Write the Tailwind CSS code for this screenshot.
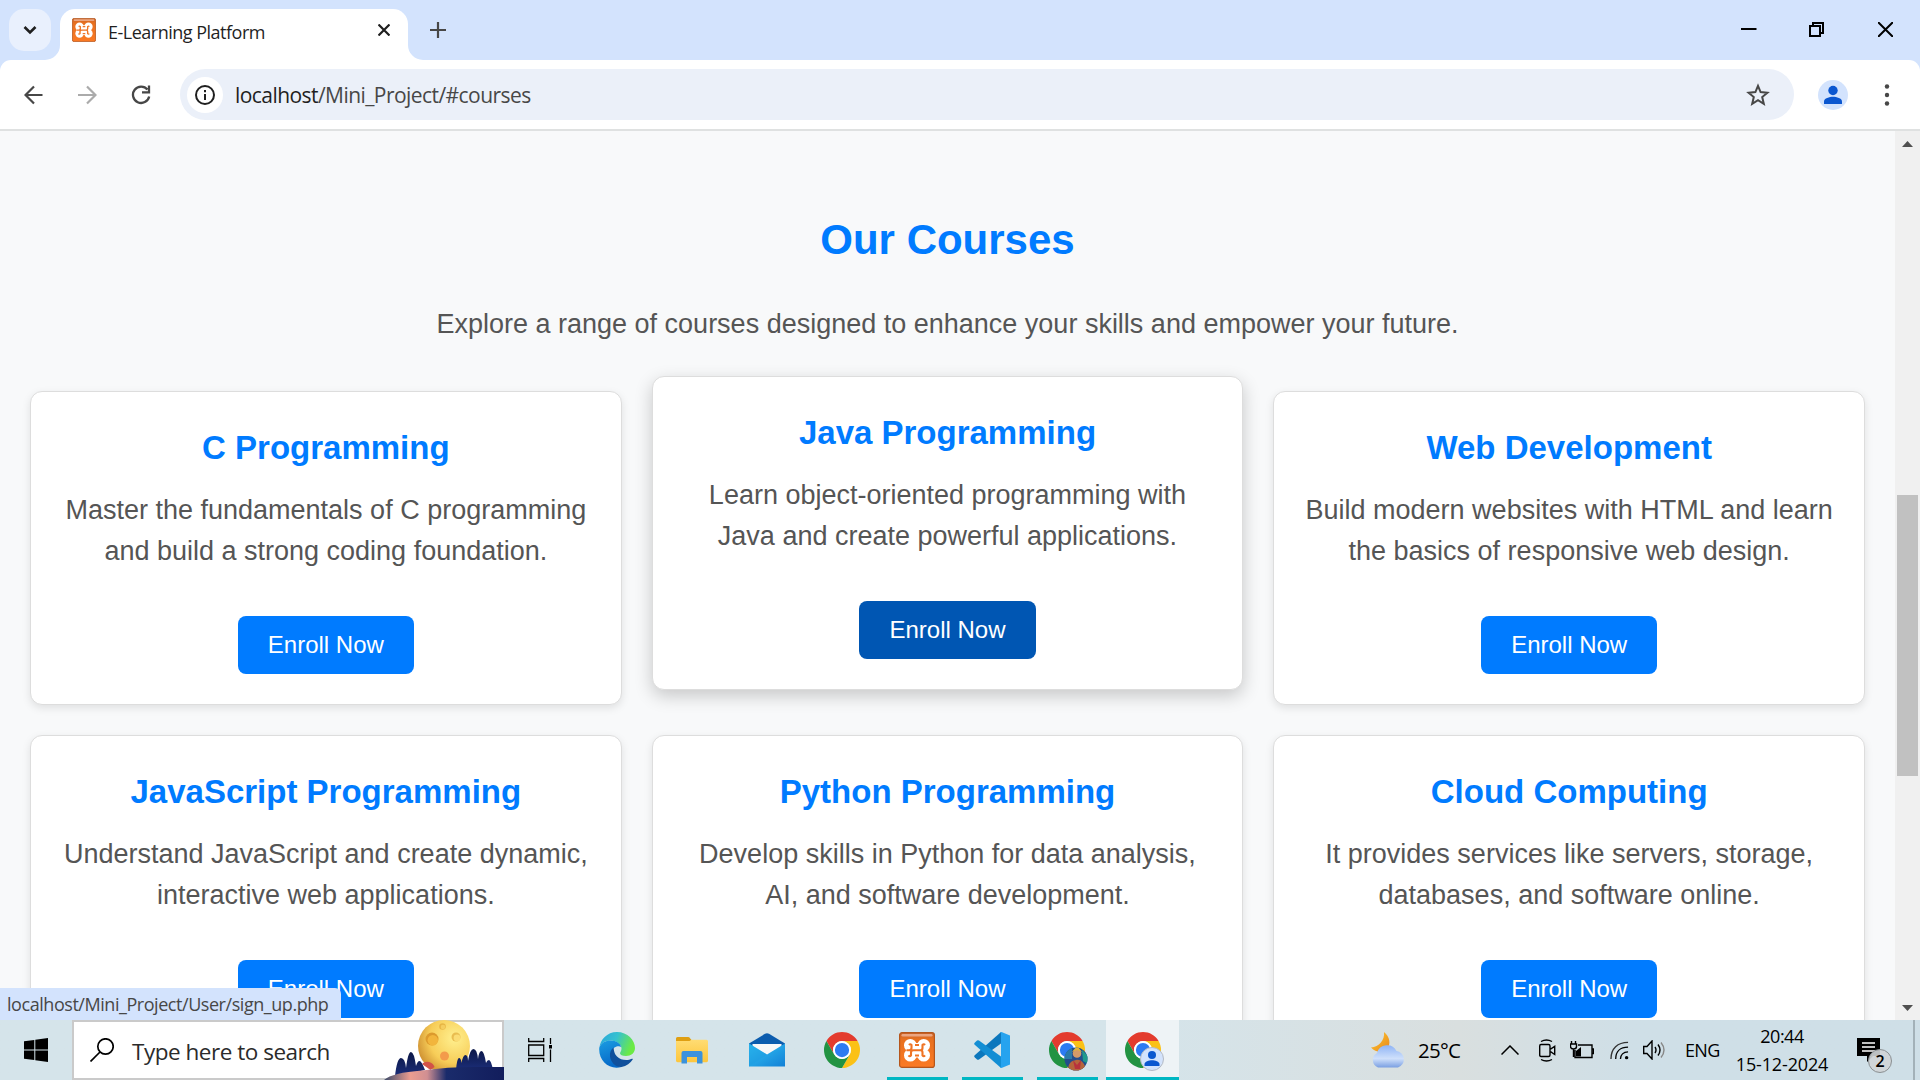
<!DOCTYPE html>
<html lang="en">
<head>
<meta charset="utf-8">
<title>E-Learning Platform</title>
<script src="https://cdn.jsdelivr.net/npm/@tailwindcss/browser@4"></script>
</head>
<body class="w-[1920px] h-[1080px] overflow-hidden flex flex-col relative bg-white font-['Open_Sans',sans-serif]">

<!-- shared icon symbols -->
<svg class="absolute w-0 h-0" aria-hidden="true">
  <defs>
    <linearGradient id="xg" x1="0" y1="0" x2="0" y2="1"><stop offset="0" stop-color="#c9642a"/><stop offset=".2" stop-color="#e8701f"/><stop offset="1" stop-color="#fb7a24"/></linearGradient>
    <linearGradient id="e1" x1="0" y1="0" x2="1" y2=".3"><stop offset="0" stop-color="#2aa5dc"/><stop offset=".5" stop-color="#35c1d0"/><stop offset="1" stop-color="#6bea45"/></linearGradient>
    <linearGradient id="e2" x1="0" y1="0" x2=".3" y2="1"><stop offset="0" stop-color="#1b9de2"/><stop offset="1" stop-color="#0669c8"/></linearGradient>
    <linearGradient id="fo" x1="0" y1="0" x2="0" y2="1"><stop offset="0" stop-color="#ffdc73"/><stop offset="1" stop-color="#fdc63c"/></linearGradient>
    <linearGradient id="ma" x1="0" y1="0" x2="1" y2="1"><stop offset="0" stop-color="#32c5f5"/><stop offset="1" stop-color="#1380d6"/></linearGradient>
    <linearGradient id="cl" x1="0" y1="0" x2="0" y2="1"><stop offset="0" stop-color="#8fb4f5"/><stop offset=".6" stop-color="#cfe0fb"/><stop offset="1" stop-color="#7a9fe2"/></linearGradient>
    <linearGradient id="mn" x1="0" y1="0" x2="1" y2="1"><stop offset="0" stop-color="#ffcb30"/><stop offset="1" stop-color="#e8861c"/></linearGradient>
    <radialGradient id="moon" cx=".7" cy=".35" r=".8"><stop offset="0" stop-color="#fff08f"/><stop offset=".6" stop-color="#f7cd58"/><stop offset="1" stop-color="#c8872c"/></radialGradient>
    <linearGradient id="hill" x1="0" y1="0" x2="1" y2="0"><stop offset="0" stop-color="#3a4a6a"/><stop offset=".22" stop-color="#eb9d90"/><stop offset=".36" stop-color="#d08f92"/><stop offset=".52" stop-color="#1a2b6b"/><stop offset="1" stop-color="#121d5c"/></linearGradient>
    <linearGradient id="tree" x1="0" y1="0" x2="0" y2="1"><stop offset="0" stop-color="#0c1848"/><stop offset="1" stop-color="#1b2d78"/></linearGradient>
    <clipPath id="bc"><circle cx="27" cy="27" r="11.5"/></clipPath>
    <symbol id="xampp" viewBox="0 0 36 36">
      <rect x=".6" y=".6" width="34.8" height="34.8" rx="2.500" fill="url(#xg)" stroke="#b5561c" stroke-width="1.200"/>
      <rect x="2.500" y="2" width="31" height="2.400" rx="1.200" fill="#eba580"/>
      <g fill="#fff"><circle cx="11.300" cy="13.200" r="6.300"/><circle cx="24.700" cy="13.200" r="6.300"/><circle cx="11.300" cy="23.300" r="6.300"/><circle cx="24.700" cy="23.300" r="6.300"/><rect x="8" y="11" width="20" height="14.500"/></g>
      <path d="M10 13q1.200-1.600 2.500 0v3q0 2.200-2.300 2.200H7.500M26 13q-1.200-1.600-2.500 0v3q0 2.200-2 2.200h-7q-2.500 0-2.500 2.200v3q-1.200 1.600-2.500 0M21.500 18.200q2 0 2 2.200v3q1.200 1.600 2.500 0M16 13h4M16 23.500h4" fill="none" stroke="#ef7425" stroke-width="2.100"/>
    </symbol>
    <symbol id="chrome" viewBox="0 0 48 48">
      <path fill="#e33b2e" d="M24 12H44.780A24 24 0 0 0 3.220 12L13.610 30A12 12 0 0 1 24 12z"/>
      <path fill="#fbc116" d="M44.780 12A24 24 0 0 1 24 48L34.390 30A12 12 0 0 0 24 12z"/>
      <path fill="#229342" d="M24 48A24 24 0 0 1 3.220 12L13.610 30A12 12 0 0 0 34.390 30z"/>
      <circle cx="24" cy="24" r="12" fill="#fff"/><circle cx="24" cy="24" r="9.500" fill="#2c7bf2"/>
    </symbol>
  </defs>
</svg>

<!-- tab strip -->
<header class="h-[60px] shrink-0 bg-[#d3e3fd] flex items-start relative">
  <button class="mt-[9px] ml-[9px] w-[42px] h-[42px] rounded-[15px] bg-[#e9f0fd] flex items-center justify-center">
    <svg class="w-4 h-4" viewBox="0 0 16 16" fill="none" stroke="#1f1f1f" stroke-width="2.600"><path d="M2.500 5l5.500 5.500L13.500 5"/></svg>
  </button>
  <div class="mt-[9px] ml-[9px] w-[348px] h-[51px] rounded-t-[15px] bg-white flex items-center pl-3 pr-[18px] relative">
    <svg class="absolute -left-[15px] bottom-0 w-[15px] h-[15px]" viewBox="0 0 15 15"><path d="M15 0v15H0A15 15 0 0 0 15 0z" fill="#fff"/></svg>
    <svg class="absolute -right-[15px] bottom-0 w-[15px] h-[15px]" viewBox="0 0 15 15"><path d="M0 0v15h15A15 15 0 0 1 0 0z" fill="#fff"/></svg>
    <svg class="w-6 h-6 -mt-[9px]"><use href="#xampp"/></svg>
    <span class="ml-[12px] -mt-[5px] text-[18px] text-[#1f1f1f] whitespace-nowrap tracking-[-0.5px]">E-Learning Platform</span>
    <svg class="ml-auto -mt-[9px] w-3 h-3" viewBox="0 0 12 12" stroke="#1f1f1f" stroke-width="2.200"><path d="M.5.5l11 11M11.500.5l-11 11"/></svg>
  </div>
  <svg class="mt-[22px] ml-[22px] w-4 h-4" viewBox="0 0 16 16" stroke="#474747" stroke-width="2.200"><path d="M8 0v16M0 8h16"/></svg>
  <div class="ml-auto mr-[27px] mt-[22px] flex gap-[53px] text-black">
    <svg class="w-[16px] h-[15px]" viewBox="0 0 16 15" stroke="#000" stroke-width="2"><path d="M0 7h15.500"/></svg>
    <svg class="w-[15px] h-[15px] -ml-px" viewBox="0 0 15 15" fill="none" stroke="#000" stroke-width="2"><path d="M1 4h10v10H1zM4 4V1h10v10h-3"/></svg>
    <svg class="w-[15px] h-[15px] ml-px" viewBox="0 0 15 15" stroke="#000" stroke-width="2"><path d="M0 0l15 15M15 0L0 15"/></svg>
  </div>
</header>

<!-- toolbar -->
<div class="h-[71px] shrink-0 bg-[#d3e3fd]">
  <div class="h-full bg-white rounded-t-[11px] border-b-2 border-[#dfe1e1] flex items-center pl-[24px] pr-[29px]">
    <svg class="w-5 h-5" viewBox="0 0 20 20" fill="none" stroke="#474747" stroke-width="2.200"><path d="M18.500 10H2M10 1.500L1.500 10l8.500 8.500"/></svg>
    <svg class="w-5 h-5 ml-[33px]" viewBox="0 0 20 20" fill="none" stroke="#ababab" stroke-width="2.200"><path d="M1 10h17M10 1.500l8.500 8.500-8.500 8.500"/></svg>
    <svg class="w-5 h-5 ml-[34px]" viewBox="0 0 20 20" fill="none" stroke="#474747" stroke-width="2.300"><path d="M16.500 4.500A8.200 8.200 0 1 0 18.200 11.500M18 .5v6.800h-7"/></svg>
    <div class="ml-[29px] w-[1614px] h-[51px] rounded-full bg-[#ebf0f9] flex items-center pl-[7px] pr-[24px]">
      <div class="w-9 h-9 rounded-full bg-white flex items-center justify-center">
        <svg class="w-5 h-5" viewBox="0 0 20 20" fill="none" stroke="#1f1f1f" stroke-width="2"><circle cx="10" cy="10" r="9"/><path d="M10 9v6M10 5v2.200"/></svg>
      </div>
      <span class="ml-3 text-[21px] leading-[30px] text-[#474747] whitespace-nowrap tracking-[-0.56px]"><span class="text-[#1f1f1f]">localhost</span>/Mini_Project/#courses</span>
      <svg class="ml-auto w-6 h-6" viewBox="0 0 24 24" fill="none" stroke="#474747" stroke-width="2"><path d="M12 2.800l2.600 6.300 6.800.6-5.200 4.400 1.600 6.700L12 17.200l-5.800 3.600 1.600-6.700L2.600 9.700l6.800-.6z"/></svg>
    </div>
    <svg class="ml-6 w-[30px] h-[30px]" viewBox="0 0 30 30"><circle cx="15" cy="15" r="15" fill="#d3e3fd"/><circle cx="15" cy="10.500" r="4.700" fill="#0b57d0"/><path d="M6 24v-2.500c0-3.200 5.500-4.700 9-4.700s9 1.500 9 4.700V24z" fill="#0b57d0"/></svg>
    <svg class="ml-auto w-2 h-6" viewBox="0 0 8 24" fill="#474747"><circle cx="4" cy="3.500" r="2.200"/><circle cx="4" cy="12" r="2.200"/><circle cx="4" cy="20.500" r="2.200"/></svg>
  </div>
</div>

<!-- page viewport -->
<div class="h-[889px] shrink-0 flex overflow-hidden relative font-['Liberation_Sans',Arial,sans-serif]">
  <main class="w-[1895px] bg-[#f8f9fa] pt-[75px] px-[30px] text-center">
    <h2 class="text-[42px] leading-[67px] font-bold text-[#007bff]">Our Courses</h2>
    <p class="mt-[31px] text-[27px] leading-[41px] text-[#555]">Explore a range of courses designed to enhance your skills and empower your future.</p>
    <div class="mt-[46px] grid grid-cols-3 gap-[30px]">

      <article class="h-[314px] p-[30px] bg-white border border-[#ddd] rounded-[12px] shadow-[0_3px_9px_rgba(0,0,0,0.1)]">
        <h3 class="text-[33px] leading-[51px] font-bold text-[#007bff]">C Programming</h3>
        <p class="mt-[17px] text-[27px] leading-[41px] text-[#555]">Master the fundamentals of C programming and build a strong coding foundation.</p>
        <a class="mt-[44px] inline-flex items-center justify-center w-[176px] h-[58px] rounded-[8px] bg-[#007bff] text-white text-[24px]">Enroll Now</a>
      </article>

      <article class="-translate-y-[15px] h-[314px] p-[30px] bg-white border border-[#ddd] rounded-[12px] shadow-[0_6px_18px_rgba(0,0,0,0.2)]">
        <h3 class="text-[33px] leading-[51px] font-bold text-[#007bff]">Java Programming</h3>
        <p class="mt-[17px] text-[27px] leading-[41px] text-[#555]">Learn object-oriented programming with Java and create powerful applications.</p>
        <a class="mt-[44px] inline-flex items-center justify-center w-[177px] h-[58px] rounded-[8px] bg-[#0056b3] text-white text-[24px]">Enroll Now</a>
      </article>

      <article class="h-[314px] p-[30px] bg-white border border-[#ddd] rounded-[12px] shadow-[0_3px_9px_rgba(0,0,0,0.1)]">
        <h3 class="text-[33px] leading-[51px] font-bold text-[#007bff]">Web Development</h3>
        <p class="mt-[17px] text-[27px] leading-[41px] text-[#555]">Build modern websites with HTML and learn the basics of responsive web design.</p>
        <a class="mt-[44px] inline-flex items-center justify-center w-[176px] h-[58px] rounded-[8px] bg-[#007bff] text-white text-[24px]">Enroll Now</a>
      </article>

      <article class="h-[314px] p-[30px] bg-white border border-[#ddd] rounded-[12px] shadow-[0_3px_9px_rgba(0,0,0,0.1)]">
        <h3 class="text-[33px] leading-[51px] font-bold text-[#007bff]">JavaScript Programming</h3>
        <p class="mt-[17px] text-[27px] leading-[41px] text-[#555]">Understand JavaScript and create dynamic, interactive web applications.</p>
        <a class="mt-[44px] inline-flex items-center justify-center w-[176px] h-[58px] rounded-[8px] bg-[#007bff] text-white text-[24px]">Enroll Now</a>
      </article>

      <article class="h-[314px] p-[30px] bg-white border border-[#ddd] rounded-[12px] shadow-[0_3px_9px_rgba(0,0,0,0.1)]">
        <h3 class="text-[33px] leading-[51px] font-bold text-[#007bff]">Python Programming</h3>
        <p class="mt-[17px] text-[27px] leading-[41px] text-[#555]">Develop skills in Python for data analysis, AI, and software development.</p>
        <a class="mt-[44px] inline-flex items-center justify-center w-[177px] h-[58px] rounded-[8px] bg-[#007bff] text-white text-[24px]">Enroll Now</a>
      </article>

      <article class="h-[314px] p-[30px] bg-white border border-[#ddd] rounded-[12px] shadow-[0_3px_9px_rgba(0,0,0,0.1)]">
        <h3 class="text-[33px] leading-[51px] font-bold text-[#007bff]">Cloud Computing</h3>
        <p class="mt-[17px] text-[27px] leading-[41px] text-[#555]">It provides services like servers, storage, databases, and software online.</p>
        <a class="mt-[44px] inline-flex items-center justify-center w-[176px] h-[58px] rounded-[8px] bg-[#007bff] text-white text-[24px]">Enroll Now</a>
      </article>
    </div>
  </main>

  <!-- scrollbar -->
  <div class="w-[25px] bg-[#f0f0f0] flex flex-col items-center pt-[10px] pb-[9px]">
    <svg class="w-[11px] h-[6px]" viewBox="0 0 11 6"><path d="M0 6L5.500 0 11 6z" fill="#505050"/></svg>
    <div class="mt-[348px] w-[21px] h-[281px] bg-[#c1c1c1]"></div>
    <svg class="mt-auto w-[11px] h-[6px]" viewBox="0 0 11 6"><path d="M0 0l5.500 6L11 0z" fill="#505050"/></svg>
  </div>

  <!-- link status bubble -->
  <div class="absolute left-0 bottom-0 w-[341px] h-8 pl-[7px] flex items-center rounded-tr-[6px] bg-[#d3e3fd] text-[18px] text-[#474747] whitespace-nowrap tracking-[-0.45px] font-['Open_Sans',sans-serif]">localhost/Mini_Project/User/sign_up.php</div>
</div>

<!-- taskbar -->
<footer class="h-[60px] shrink-0 flex bg-linear-to-r from-[#d5e4ea] from-60% via-[#d9dfdf] via-76% to-[#cfdfe7] to-85% text-black">
  <div class="w-[72px] flex items-center justify-center">
    <svg class="w-6 h-6" viewBox="0 0 24 24"><path d="M0 3.300L10.300 2v9.400H0zM11.300 1.800L24 0v11.400H11.300zM0 12.400h10.300V22L0 20.700zM11.300 12.400H24V24l-12.700-1.800z"/></svg>
  </div>
  <div class="w-[432px] h-full border-2 border-[#cacaca] bg-white flex items-center pl-4 relative">
    <svg class="w-6 h-6" viewBox="0 0 24 24" fill="none" stroke="#000" stroke-width="1.700"><circle cx="15.500" cy="8.500" r="7.700"/><path d="M10 14L.5 23.500"/></svg>
    <span class="ml-[18px] pt-[3px] text-[22.500px] text-[#2b2b2b] whitespace-nowrap tracking-[-0.48px]">Type here to search</span>
    <svg class="absolute -right-[2px] -top-[2px] w-[120px] h-[60px]" viewBox="0 0 120 60">
      <circle cx="60" cy="26" r="26" fill="url(#moon)"/>
      <circle cx="48" cy="19" r="6.500" fill="#dc9a2d"/><circle cx="48.800" cy="20.300" r="5.200" fill="#f2b53c"/>
      <circle cx="58.500" cy="6.500" r="3.300" fill="#e8b645"/><circle cx="59" cy="7" r="2.300" fill="#f5cd5e"/><circle cx="72" cy="17" r="4.500" fill="#e9bd50"/><circle cx="73" cy="18" r="3.400" fill="#fbdc74"/><circle cx="60.500" cy="36" r="4.500" fill="#f39b4b"/>
      <path d="M38 44a7.500 7.500 0 0 1 12.500 3l-4 3z" fill="#d25248"/>
      <path d="M11 56Q13 38 17 38T22 48Q24 32 27 32T32 46Q33.500 41 35.500 41T41 50L24 54z" fill="url(#tree)"/>
      <path d="M72 50Q73 38 75 38T77.500 43Q79 35 81.500 35T84 41Q86 29 89.500 29T94 39Q95 31 97.500 31T102 43Q103 40 105 40T109 50z" fill="url(#tree)"/>
      <path d="M0 60c6-5 18-8 38-9.500C56 48 72 47 90 47h30v13z" fill="url(#hill)"/>
    </svg>
  </div>
  <div class="w-[75px] flex items-center justify-center pr-[3px]">
    <svg class="w-6 h-6" viewBox="0 0 24 24" fill="none" stroke="#000" stroke-width="1.300"><path d="M.7 0v3.500h15V0M.7 7h15v10.500h-15zM.7 24v-3.500h15V24M22.500 0v6M22.500 11.500V24"/><path d="M21 7h3v3.500h-3z" fill="#000" stroke="none"/></svg>
  </div>
  <div class="w-[75px] flex items-center justify-center">
    <svg class="w-9 h-9" viewBox="0 0 36 36">
      <path d="M.5 15.500C1 8 8 0 18 0c10.500 0 18 8 18 16 0 5-4 8-9 8-4 0-6-1.500-6-2.800 0-1 1.500-1.700 1.500-4.700 0-4-5-8-11-8S1.500 12 .5 15.500z" fill="url(#e1)"/>
      <path d="M.3 15.500C2 11 6.500 8.500 11.500 8.500c6 0 10 3 10.700 6.500-2-1.500-8-1-9.700 5-1.500 6 3 13 10 15-12 3.500-23.500-6-22.200-19.500z" fill="url(#e2)"/>
      <path d="M14.500 15.500c-2.500 2-4 5-3.500 9 .8 6 6 11 11.500 10.500 5-1 9-4 11.200-7.500.3-.8-.3-1-.8-.7-5 2.500-11.400 1.200-14.900-2.300-3-3-3-6.500-3.500-9z" fill="#10509c"/>
    </svg>
  </div>
  <div class="w-[75px] flex items-center justify-center">
    <svg class="w-8 h-[27px]" viewBox="0 0 32 27"><path d="M0 1.500Q0 0 1.500 0H12q1.500 0 2 1.200L15.500 3v4H0z" fill="#df9f12"/><path d="M0 4h13.500l2-1.200H30.500Q32 2.800 32 4.300v19.500q0 1.400-1.500 1.400h-29Q0 25.200 0 23.800z" fill="url(#fo)"/><path d="M5.500 26.500V16q0-2 2-2h17q2 0 2 2v10.500h-5.500V20h-10v6.500z" fill="#3b92dc"/></svg>
  </div>
  <div class="w-[75px] flex items-center justify-center">
    <svg class="w-9 h-[34px]" viewBox="0 0 36 34"><path d="M0 10.500L16 .8q2-1.200 4 0l16 9.700V14H0z" fill="#0b5cae"/><path d="M3.500 11h29v3L18 23 3.500 14z" fill="#f7f7f8"/><path d="M0 10.500l18 11 18-11v23H0z" fill="url(#ma)"/><path d="M18 21.500L0 33.500V10.500z" fill="#1c9cdf" opacity=".45"/></svg>
  </div>
  <div class="w-[75px] flex items-center justify-center"><svg class="w-9 h-9"><use href="#chrome"/></svg></div>
  <div class="w-[75px] pl-px flex flex-col items-center pt-3"><svg class="w-9 h-9"><use href="#xampp"/></svg><div class="mt-auto w-[61px] h-[3px] bg-[#00b7c3]"></div></div>
  <div class="w-[75px] pl-px flex flex-col items-center pt-3">
    <svg class="w-9 h-9" viewBox="0 0 36 36"><path d="M27 0v11.500L5 27.500q-1 .7-2 0L.7 25.300q-1-1 0-2z" fill="#0b77bd"/><path d="M27 36V24.500L5 8.500q-1-.7-2 0L.7 10.700q-1 1 0 2z" fill="#138ed4"/><path d="M26 .3l1.500-.3L36 3.500v29L27.500 36 26 35.500q1 0 1-1.500V2q0-1.500-1-1.700z" fill="#26a3ef"/></svg>
    <div class="mt-auto w-[61px] h-[3px] bg-[#00b7c3]"></div>
  </div>
  <div class="w-[75px] pl-px flex flex-col items-center pt-3">
    <svg class="w-9 h-9 overflow-visible" viewBox="0 0 36 36"><use href="#chrome" width="36" height="36"/>
      <g clip-path="url(#bc)"><rect x="15" y="15" width="24" height="24" fill="#234e8c"/><path d="M15 15h8v12h-8z" fill="#2a7aa8"/><path d="M33 18l6 6v8l-5-3z" fill="#1e9a8d"/><path d="M19 39c0-8 3-10 8-11s9 3 10 11z" fill="#b5653c"/><circle cx="28" cy="21.500" r="4.300" fill="#d39a68"/><path d="M23 20l5-6 5 6-5-2z" fill="#e0b33b"/><path d="M24 28l4 5 4-5-1 9h-5z" fill="#b8323c"/></g>
    </svg>
    <div class="mt-auto w-[61px] h-[3px] bg-[#00b7c3]"></div>
  </div>
  <div class="w-[73px] ml-[2px] flex flex-col items-center pt-3 bg-[#eef3f6]">
    <svg class="w-9 h-9 overflow-visible" viewBox="0 0 36 36"><use href="#chrome" width="36" height="36"/><circle cx="27" cy="27" r="11.500" fill="#d3e3fd" stroke="#b4bac4"/><circle cx="27" cy="23" r="4" fill="#0b57d0"/><path d="M19.500 34v-2c0-2.500 4.500-3.800 7.500-3.800s7.500 1.300 7.500 3.800v2z" fill="#0b57d0"/></svg>
    <div class="mt-auto w-full h-[3px] bg-[#00b7c3]"></div>
  </div>

  <!-- weather and tray -->
  <div class="ml-auto w-[741px] flex items-center pl-[191px] relative">
    <svg class="w-9 h-9 shrink-0" viewBox="0 0 36 36"><path d="M14 0c6 5 7 12 3 17-4 4-11 4-16-1.500C9 15 15 8 14 0z" fill="url(#mn)"/><path d="M8 35.500a8 8 0 0 1-1-14.500A10.500 10.500 0 0 1 26.500 19 8.500 8.500 0 0 1 28 35.500z" fill="url(#cl)"/></svg>
    <span class="ml-3 w-[43px] shrink-0 pt-px text-[20.500px] whitespace-nowrap tracking-[-0.7px]">25°C</span>
    <svg class="ml-[40px] w-[18px] h-[10px] shrink-0" viewBox="0 0 18 10" fill="none" stroke="#000" stroke-width="1.500"><path d="M.5 9.500L9 1l8.500 8.500"/></svg>
    <svg class="ml-5 w-[17px] h-[23px] shrink-0" viewBox="0 0 17 23" fill="none" stroke="#000" stroke-width="1.400"><path d="M2 5.500h7.500q1.500 0 1.500 1.500v9q0 1.500-1.500 1.500H2Q.7 17.500.7 16V7Q.7 5.500 2 5.500zM11 9.800h1l3.700-2.500v8.200L12 13h-1M2 2.500q5.500-3 11 0M2 20.500q5.500 3 11 0"/></svg>
    <svg class="ml-[14px] w-6 h-[18px] -mt-px shrink-0" viewBox="0 0 24 18" fill="none" stroke="#000" stroke-width="1.400"><path d="M8 4h14v12.500H5V9M22 8h1.500v4.500H22M1.500 0v3M5.500 0v3M.5 3h6v2.500q0 2.500-3 2.500t-3-2.500zM3.500 8v8"/><path d="M6 15.500V10l5-4v9.500z" fill="#000" stroke="none"/></svg>
    <svg class="ml-4 w-[19px] h-[19px] shrink-0" viewBox="0 0 20 20" fill="none" stroke="#000" stroke-width="1.400"><path d="M1 19C1 8 8 1.500 19 1.500" stroke="#333"/><path d="M6 19C6 11 11 6.500 19 6.500M11 19C11 14.500 14 11.500 19 11.500"/><circle cx="17.500" cy="17.500" r="1.800" fill="#000" stroke="none"/></svg>
    <svg class="ml-[14px] w-[23px] h-5 shrink-0" viewBox="0 0 23 20" fill="none" stroke="#000" stroke-width="1.400"><path d="M.7 6.500H4l5-5.500v18l-5-5.500H.7zM12 7q2 3 0 6M15 4.500q4 5.500 0 11"/><path d="M18 2.500q6 7.500 0 15" stroke="#888"/></svg>
    <span class="ml-[19px] w-[36px] shrink-0 text-[18px] tracking-[-0.7px]">ENG</span>
    <div class="ml-[12px] w-[98px] shrink-0 flex flex-col items-center text-[18px] leading-[28px] whitespace-nowrap"><span class="tracking-[-0.5px]">20:44</span><span class="tracking-[-0.15px]">15-12-2024</span></div>
    <div class="ml-[26px] w-[36px] h-[36px] relative shrink-0">
      <svg class="w-[23px] h-[24px] mt-[6px]" viewBox="0 0 23 24"><path d="M0 0h23v18h-7l-6 6v-6H0z"/><path d="M5 5h13M5 9h13M5 13h13" stroke="#fff" stroke-width="1.300"/></svg>
      <div class="absolute left-[11px] top-[17px] w-6 h-6 rounded-full bg-[#cfd4d6]/90 border border-[#8a8f92] flex items-center justify-center text-[16px] font-semibold">2</div>
    </div>
    <div class="absolute left-[734px] top-0 w-0.5 h-full bg-[#a3b1b8]"></div>
  </div>
</footer>
</body>
</html>
